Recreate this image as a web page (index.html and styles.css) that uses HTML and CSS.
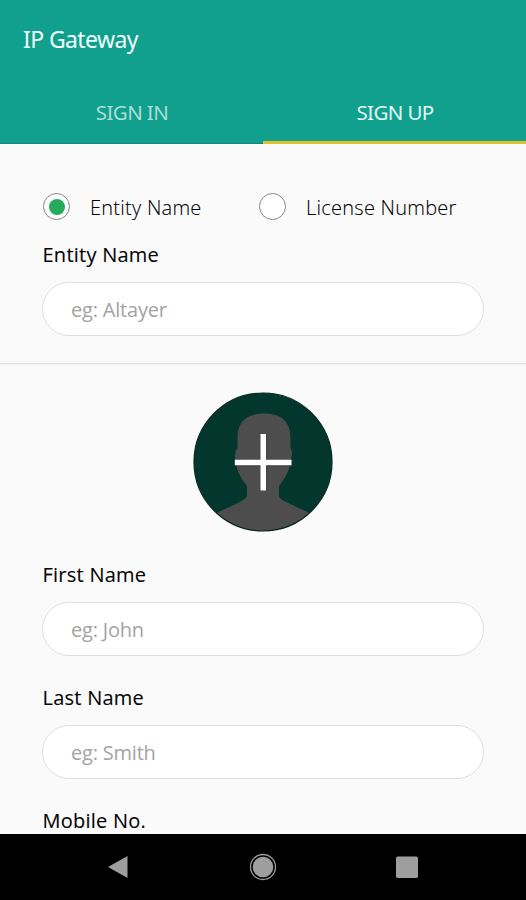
FILE: index.html
```html
<!DOCTYPE html>
<html lang="en">
<head>
<meta charset="utf-8">
<meta name="viewport" content="width=device-width, initial-scale=1">
<title>IP Gateway</title>
<link rel="stylesheet" href="styles.css">
</head>
<body>
<div class="screen">
  <header class="app-bar">
    <h1 class="title">IP Gateway</h1>
    <nav class="tabs">
      <a class="tab">SIGN IN</a>
      <a class="tab active">SIGN UP</a>
    </nav>
  </header>
  <main class="content">
    <section class="entity">
      <div class="options">
        <div class="option"><span class="radio checked"></span><span class="option-text">Entity Name</span></div>
        <div class="option"><span class="radio"></span><span class="option-text">License Number</span></div>
      </div>
      <div class="label entity-label">Entity Name</div>
      <div class="field">eg: Altayer</div>
    </section>
    <section class="person">
      <svg class="avatar" viewBox="0 0 140 140">
        <defs><clipPath id="disc"><circle cx="70" cy="70" r="69"/></clipPath></defs>
        <circle cx="70" cy="70" r="69" fill="#03362d"/>
        <path clip-path="url(#disc)" fill="#4d4d4d" d="M44.500 46C44.500 30 53 21.500 71 21.500S97.500 30 97.500 46V56Q100 59 98.500 65C97 78 93 85 86 94V104Q87 107 92 109.500L125 125V140H15V125L47 110Q54 106 54 103V94C47 85 43 78 42 65Q41.500 59 44.500 56Z"/>
        <circle cx="70" cy="70" r="69" fill="none" stroke="#092620" stroke-width="1.200"/>
        <path d="M67 41.500H73V67.500H99V74H73V98.500H67V74H41.500V67.500H67Z" fill="#303030" opacity=".5" transform="translate(.8 .5)"/>
        <path d="M67.500 42H73V67.800H98.500V73.300H73V98.500H67.500V73.300H41.800V67.800H67.500Z" fill="#fff"/>
      </svg>
      <div class="label first-label">First Name</div>
      <div class="field">eg: John</div>
      <div class="label next-label">Last Name</div>
      <div class="field">eg: Smith</div>
      <div class="label next-label">Mobile No.</div>
    </section>
  </main>
  <footer class="nav-bar">
    <svg class="nav-icon back" viewBox="0 0 30 30"><path d="M5 15L24.500 4V26Z" fill="#9e9e9e"/></svg>
    <svg class="nav-icon" viewBox="0 0 30 30"><circle cx="15" cy="15" r="12.500" fill="none" stroke="#9e9e9e" stroke-width="1.300"/><circle cx="15" cy="15" r="10.300" fill="#9e9e9e"/></svg>
    <svg class="nav-icon" viewBox="0 0 30 30"><rect x="4" y="4.500" width="22" height="21.500" rx="1.800" fill="#9e9e9e"/></svg>
  </footer>
</div>
</body>
</html>
```
FILE: styles.css
```css
* { box-sizing: border-box; }
body { margin: 0; font-family: "Open Sans", "Noto Sans", sans-serif; background: #fafafa; }
.screen { width: 526px; height: 900px; display: flex; flex-direction: column; overflow: hidden; }
.app-bar { height: 144px; flex: none; background: #11a08d; display: flex; flex-direction: column; justify-content: space-between; }
.title { margin: 0; padding: 24px 0 0 23px; font: 400 23px/30px "Noto Sans", sans-serif; letter-spacing: -.6px; color: #f0fffc; }
.tabs { display: flex; height: 64px; }
.tab { flex: 1; text-align: center; font: 400 20.5px/65px "Noto Sans", sans-serif; letter-spacing: -.6px; padding-left: 1px; color: #a9ded6; border-bottom: 1px solid #0d8c7a; }
.tab.active { color: #e2f7f3; border-bottom: 3px solid #e0c02f; }
.content { flex: 1; min-height: 0; overflow: hidden; }
.entity { height: 220px; padding: 48px 42px 0; border-bottom: 1px solid #e2e2e2; box-shadow: 0 1px 1px #f0f0f0; }
.options { display: flex; height: 30px; }
.option { width: 216px; display: flex; align-items: center; gap: 21px; white-space: nowrap; }
.radio { width: 27px; height: 27px; flex: none; margin-top: -1px; border: 1px solid #868686; border-radius: 50%; background: #fff; display: grid; place-items: center; }
.option .radio { margin-left: 1px; margin-right: -1px; }
.radio.checked::after { content: ""; width: 16px; height: 16px; border-radius: 50%; background: #24ab5c; }
.option-text { font-size: 20px; line-height: 30px; font-weight: 300; letter-spacing: .25px; color: #000; padding-top: 1px; -webkit-text-stroke: .1px #000; }
.label { font-size: 20px; line-height: 28px; font-weight: 500; letter-spacing: .25px; color: #050505; padding-left: .5px; -webkit-text-stroke: .1px #050505; }
.entity-label { margin-top: 19px; }
.field { margin-top: 13px; height: 54px; border: 1px solid #dedede; border-radius: 27px; background: #fff; padding-left: 28px; font-size: 20px; line-height: 53px; letter-spacing: -.2px; color: #a3a3a3; }
.person { padding: 28px 42px 0; display: flex; flex-direction: column; }
.avatar { width: 140px; height: 140px; margin: 0 auto; display: block; }
.first-label { margin-top: 29px; }
.next-label { margin-top: 28px; }
.nav-bar { height: 66px; flex: none; background: #000; display: flex; justify-content: center; align-items: center; gap: 114px; }
.nav-icon { width: 30px; height: 30px; }
.back { margin-left: -1px; margin-right: 1px; }
```
